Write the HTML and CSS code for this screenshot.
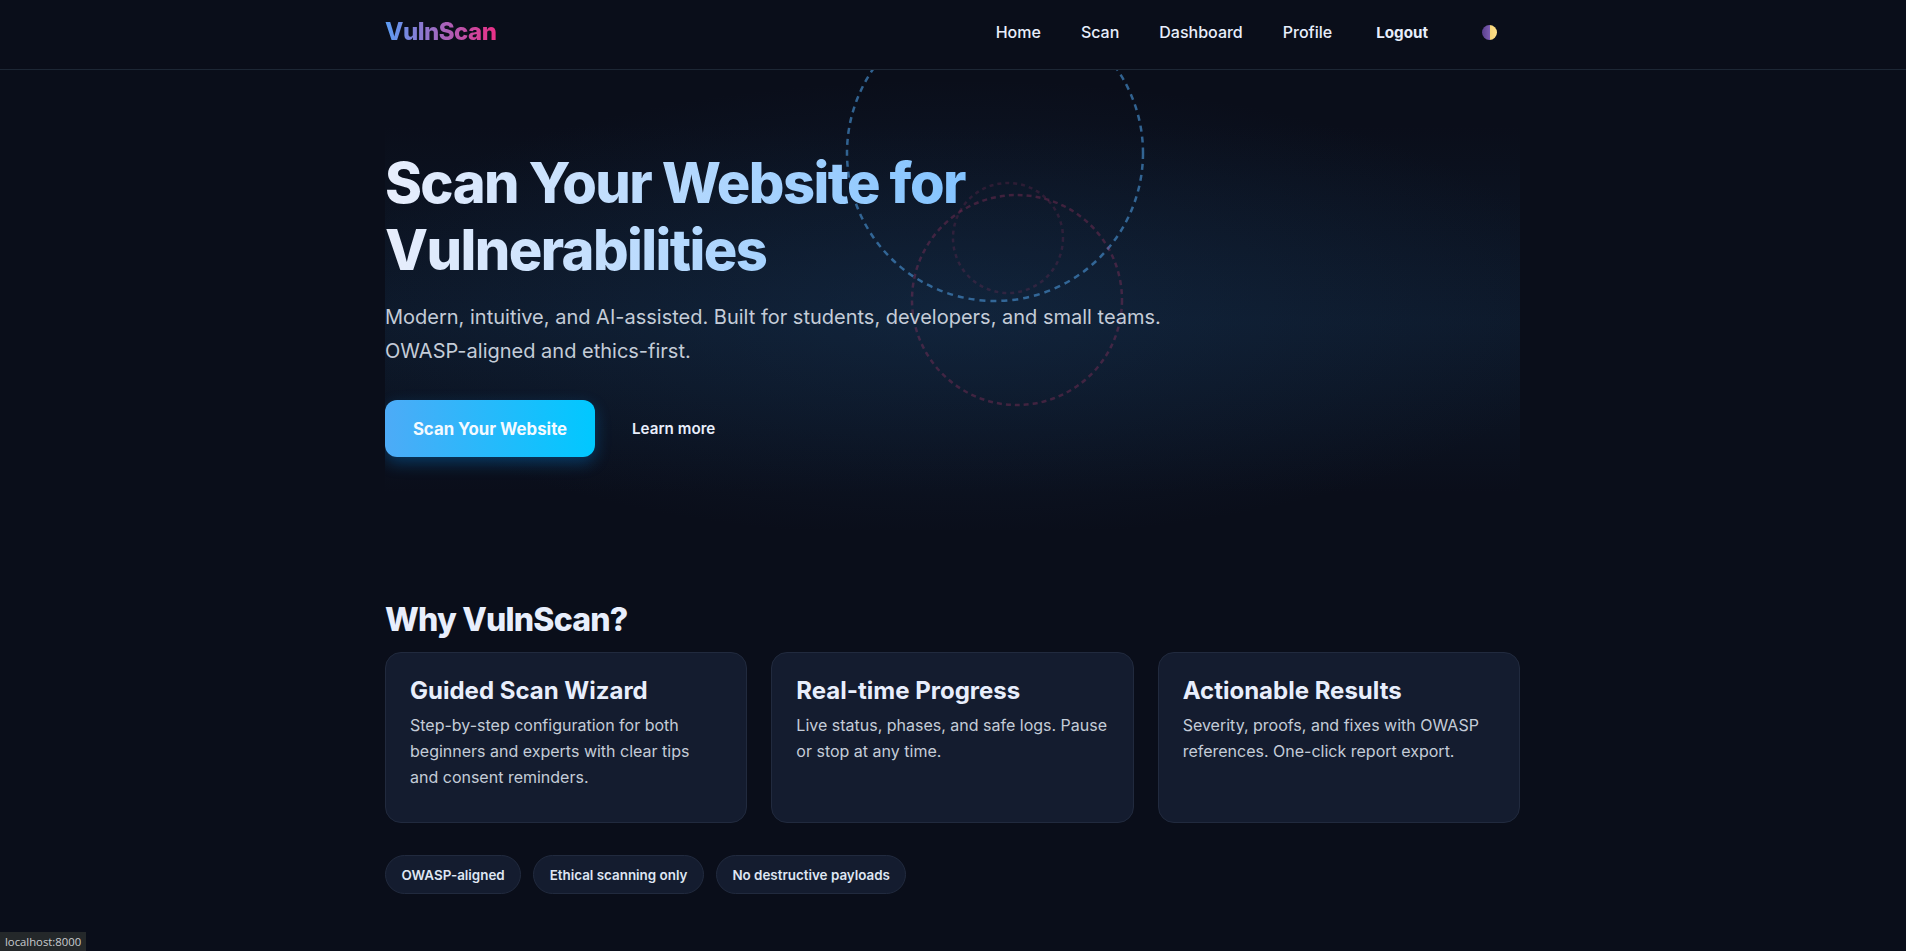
FILE: index.html
```html
<!DOCTYPE html>
<html lang="en">
<head>
    <meta charset="UTF-8">
    <meta name="viewport" content="width=device-width, initial-scale=1.0">
    <title>VulnScan</title>
    <link rel="stylesheet" href="styles.css">
</head>
<body>
    <header class="navbar">
        <div class="nav-inner">
            <a class="logo" href="#">VulnScan</a>
            <nav class="nav-links">
                <a href="#">Home</a>
                <a href="#">Scan</a>
                <a href="#">Dashboard</a>
                <a href="#">Profile</a>
                <button class="logout-button">Logout</button>
                <button class="theme-toggle" aria-label="Toggle theme"><span class="theme-dot"></span></button>
            </nav>
        </div>
    </header>

    <main class="page">
        <section class="hero">
            <svg class="hero-rings" viewBox="0 0 1136 460" aria-hidden="true">
                <circle class="ring-blue" cx="610" cy="83" r="148"></circle>
                <circle class="ring-red" cx="632" cy="230" r="105"></circle>
                <circle class="ring-red-small" cx="623" cy="168" r="55"></circle>
            </svg>
            <div class="hero-copy">
                <h1>Scan Your Website for Vulnerabilities</h1>
                <p>Modern, intuitive, and AI-assisted. Built for students, developers, and small teams. OWASP-aligned and ethics-first.</p>
                <div class="hero-actions">
                    <a class="btn-primary" href="#">Scan Your Website</a>
                    <a class="btn-link" href="#">Learn more</a>
                </div>
            </div>
        </section>

        <section class="why">
            <h2>Why VulnScan?</h2>
            <div class="card-grid">
                <article class="card">
                    <h3>Guided Scan Wizard</h3>
                    <p>Step-by-step configuration for both beginners and experts with clear tips and consent reminders.</p>
                </article>
                <article class="card">
                    <h3>Real-time Progress</h3>
                    <p>Live status, phases, and safe logs. Pause or stop at any time.</p>
                </article>
                <article class="card">
                    <h3>Actionable Results</h3>
                    <p>Severity, proofs, and fixes with OWASP references. One-click report export.</p>
                </article>
            </div>
            <div class="chips">
                <span class="chip">OWASP-aligned</span>
                <span class="chip">Ethical scanning only</span>
                <span class="chip">No destructive payloads</span>
            </div>
        </section>
    </main>

    <div class="status-bar">localhost:8000</div>
</body>
</html>
```

FILE: styles.css
```css
* {
    box-sizing: border-box;
}

html, body {
    margin: 0;
    height: 100%;
}

body {
    background: #0a0e1a;
    color: #e8eefc;
    font-family: Inter, "Noto Sans", sans-serif;
    overflow: hidden;
}

a {
    color: inherit;
    text-decoration: none;
}

button {
    background: none;
    border: none;
    color: inherit;
    font-family: inherit;
    padding: 0;
}

/* top bar */
.navbar {
    height: 70px;
    background: #0a0e1a;
    border-bottom: 1px solid #1d2735;
}

.nav-inner {
    max-width: 1200px;
    height: 100%;
    margin: 0 auto;
    padding: 0 32px;
    display: flex;
    align-items: center;
    justify-content: space-between;
}

.logo {
    font-size: 24px;
    font-weight: 800;
    letter-spacing: -0.5px;
    margin-top: -6px;
    background: linear-gradient(90deg, #5b9df5, #ec2f86);
    -webkit-background-clip: text;
    background-clip: text;
    color: transparent;
}

.nav-links {
    display: flex;
    align-items: center;
    margin-top: -6px;
    font-size: 16px;
    font-weight: 500;
    color: #e8eefc;
}

.nav-links a {
    margin-right: 40px;
}

.nav-links a:nth-child(4) {
    margin-right: 45px;
}

.logout-button {
    font-size: 15.2px;
    font-weight: 700;
    margin-top: 2px;
    margin-right: 54px;
    margin-left: -1px;
}

.theme-toggle {
    display: flex;
    margin-top: 1px;
    margin-right: 24px;
}

.theme-dot {
    width: 15px;
    height: 15px;
    border-radius: 50%;
    background: linear-gradient(90deg, #5a3f8c 0%, #7a5bb0 50%, #f5d376 50%, #ffe08a 100%);
}

/* hero */
.page {
    max-width: 1200px;
    margin: 0 auto;
    padding: 0 33px 0 32px;
}

.hero {
    position: relative;
    height: 460px;
    overflow: hidden;
    background:
        radial-gradient(ellipse 640px 230px at 50% 52%, rgba(26, 62, 100, 0.3), rgba(26, 62, 100, 0) 100%),
        linear-gradient(180deg, rgba(16, 34, 56, 0) 12%, rgba(16, 34, 56, 0.55) 55%, rgba(16, 34, 56, 0) 92%);
}

.hero-rings {
    position: absolute;
    top: 0;
    left: 0;
    width: 1136px;
    height: 460px;
    fill: none;
}

.ring-blue {
    stroke: #3f7fb8;
    stroke-width: 2.5;
    stroke-dasharray: 6 5;
    opacity: 0.75;
}

.ring-red {
    stroke: #c43a6e;
    stroke-width: 2.5;
    stroke-dasharray: 5 4;
    opacity: 0.28;
}

.ring-red-small {
    stroke: #c43a6e;
    stroke-width: 2.5;
    stroke-dasharray: 4 4;
    opacity: 0.18;
}

.hero-copy {
    position: relative;
    padding-top: 80px;
}

.hero h1 {
    display: inline-block;
    width: 600px;
    margin: 0;
    font-size: 56px;
    font-weight: 800;
    line-height: 67px;
    letter-spacing: -1.6px;
    background: linear-gradient(90deg, #e8eefc, #80c2ff);
    -webkit-background-clip: text;
    background-clip: text;
    color: transparent;
}

.hero p {
    width: 800px;
    margin: 16px 0 0;
    font-size: 20px;
    line-height: 34px;
    color: #c4ccd8;
}

.hero-actions {
    display: flex;
    align-items: center;
    margin-top: 32px;
}

.btn-primary {
    width: 210px;
    height: 57px;
    display: flex;
    align-items: center;
    justify-content: center;
    border-radius: 12px;
    background: linear-gradient(90deg, #4dabf7, #00c8ff);
    box-shadow: 0 6px 16px rgba(0, 150, 255, 0.3);
    color: #f4faff;
    font-size: 16.8px;
    font-weight: 700;
}

.btn-link {
    margin-left: 37px;
    font-size: 15.2px;
    font-weight: 600;
}

/* why section */
.why h2 {
    margin: 70px 0 0;
    font-size: 32px;
    line-height: 40px;
    font-weight: 800;
    letter-spacing: -0.8px;
}

.card-grid {
    display: grid;
    grid-template-columns: repeat(3, 1fr);
    gap: 24px;
    margin-top: 12px;
}

.card {
    height: 171px;
    padding: 23px 25px 24px 24px;
    background: #141c2f;
    border: 1px solid #212a3e;
    border-radius: 16px;
}

.card h3 {
    margin: 0;
    font-size: 24px;
    line-height: 30px;
    font-weight: 700;
    color: #e8eefc;
}

.card p {
    margin: 6px 0 0;
    font-size: 16px;
    line-height: 26px;
    color: #c4ccd8;
}

.chips {
    display: flex;
    gap: 12px;
    margin-top: 32px;
}

.chip {
    height: 39px;
    padding: 0 15.5px;
    display: flex;
    align-items: center;
    background: #141c2f;
    border: 1px solid #212a3e;
    border-radius: 999px;
    font-size: 13.4px;
    font-weight: 600;
    color: #dfe6f3;
}

.status-bar {
    position: fixed;
    left: 0;
    bottom: 0;
    height: 19px;
    padding: 0 5px;
    display: flex;
    align-items: center;
    background: #24282a;
    color: #c8cccf;
    font-family: "Open Sans", sans-serif;
    font-size: 11.3px;
}
```
